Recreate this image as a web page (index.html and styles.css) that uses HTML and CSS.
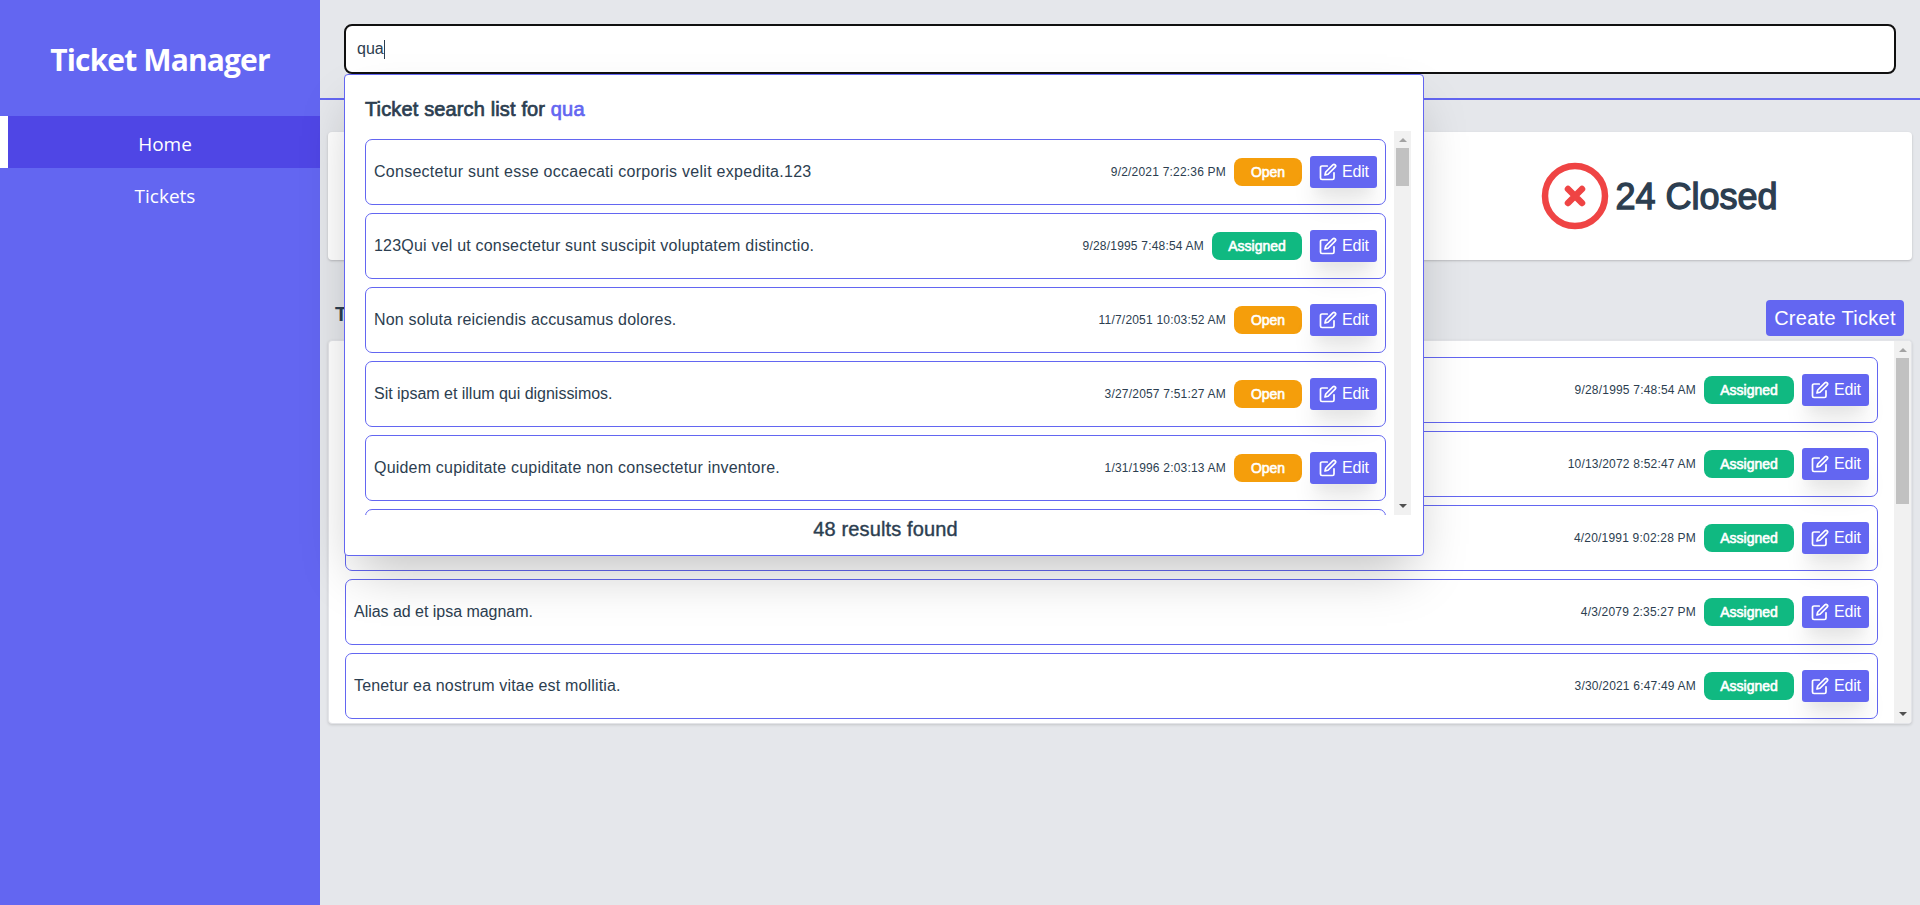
FILE: index.html
```
<!DOCTYPE html>
<html lang="en">
<head>
<meta charset="utf-8">
<title>Ticket Manager</title>
<link rel="stylesheet" href="styles.css">
</head>
<body>
<svg class="defs" width="0" height="0">
  <symbol id="edit" viewBox="0 0 24 24"><path d="M11 4H4a2 2 0 0 0-2 2v14a2 2 0 0 0 2 2h14a2 2 0 0 0 2-2v-7"/><path d="M18.500 2.500a2.121 2.121 0 0 1 3 3L12 15l-4 1 1-4 9.500-9.500z"/></symbol>
</svg>
<div class="app">
  <aside class="sidebar">
    <h1 class="brand"><span>Ticket Manager</span></h1>
    <nav>
      <a class="link active"><span>Home</span></a>
      <a class="link"><span>Tickets</span></a>
    </nav>
  </aside>
  <main class="main">
    <header class="header">
      <div class="search"><span>qua</span><i class="caret"></i></div>
      <section class="dropdown">
        <h2 class="dropdown-title">Ticket search list for <em>qua</em></h2>
        <div class="viewport results">
          <div class="rows" id="results"></div>
          <div class="scrollbar"><i class="up"></i><i class="thumb"></i><i class="down"></i></div>
        </div>
        <p class="count"><span>48 results found</span></p>
      </section>
    </header>
    <section class="stats">
      <div class="stat"></div><div class="stat"></div>
      <div class="stat closed">
        <svg width="68" height="68" viewBox="0 0 68 68"><circle cx="34" cy="34" r="30"/><path d="M27 27l14 14M41 27l-14 14"/></svg>
        <span>24 Closed</span>
      </div>
    </section>
    <div class="bar"><h2>Tickets</h2><button class="create"><span>Create Ticket</span></button></div>
    <section class="viewport tickets">
      <div class="rows" id="tickets"></div>
      <div class="scrollbar"><i class="up"></i><i class="thumb"></i><i class="down"></i></div>
    </section>
  </main>
</div>
<script src="app.js"></script>
</body>
</html>
```
FILE: styles.css
```
* { box-sizing: border-box; }
body { margin: 0; background: #e5e7eb; color: #2c3e50; font-family: "Liberation Sans", Arial, sans-serif; }
h1, h2, p { margin: 0; }
.defs { display: block; height: 0; }
.app { display: flex; height: 905px; overflow: hidden; }
.sidebar { width: 320px; flex: none; background: #6366f1; color: #fff; font-family: "Open Sans", "Noto Sans", sans-serif; }
.brand { height: 116px; padding-top: 37px; text-align: center; font-size: 30px; line-height: 45px; font-weight: 700; white-space: nowrap; letter-spacing: -0.88px; }
.link { display: flex; height: 52px; align-items: center; justify-content: center; border-left: 8px solid transparent; padding: 4px 0 0 2px; font-size: 19px; line-height: 28px; }
.link.active { background: #4f46e5; border-left-color: #fff; }
.main { flex: 1; min-width: 0; display: flex; flex-direction: column; }
.header { position: relative; height: 100px; padding: 24px; border-bottom: 2px solid #6366f1; }
.search { display: flex; align-items: center; height: 50px; padding: 0 11px; background: #fff; border: 2px solid #101010; border-radius: 8px; font-size: 16px; }
.caret { width: 1px; height: 19px; background: #2c3e50; }
.dropdown { position: absolute; left: 24px; top: 74px; width: 1080px; height: 482px; padding: 20px 12px 0 20px; background: #fff; border: 1px solid #6366f1; border-radius: 4px; box-shadow: 0 25px 50px -12px rgba(0,0,0,.25); z-index: 5; }
.dropdown-title { height: 36px; font-size: 20px; line-height: 28px; font-weight: 400; letter-spacing: .14px; -webkit-text-stroke: .7px currentColor; }
.dropdown-title em { font-style: normal; color: #6366f1; }
.viewport { display: flex; overflow: hidden; }
.results { height: 384px; }
.rows { flex: 1; display: flex; flex-direction: column; gap: 8px; padding: 8px 8px 0 0; }
.row { flex: none; display: flex; align-items: center; gap: 8px; height: 66px; padding: 0 8px; border: 1px solid #6366f1; border-radius: 7px; }
.text { flex: 1; font-size: 16px; line-height: 24px; white-space: nowrap; }
.date { font-size: 12px; line-height: 16px; letter-spacing: .2px; white-space: nowrap; }
.badge { height: 28px; padding: 0 16px; border-radius: 8px; color: #fff; font-size: 14px; line-height: 28px; text-align: center; white-space: nowrap; -webkit-text-stroke: .6px #fff; }
.open { width: 68px; background: #f59e0b; }
.assigned { width: 90px; background: #10b981; }
.edit { display: flex; align-items: center; width: 67px; height: 32px; padding: 0 8px 0 9px; gap: 5px; border-radius: 3px; background: #6366f1; color: #fff; font-size: 16px; letter-spacing: -.2px; box-shadow: 0 20px 25px -5px rgba(0,0,0,.1), 0 10px 10px -5px rgba(0,0,0,.04); }
.edit svg { width: 18px; height: 18px; flex: none; fill: none; stroke: #fff; stroke-width: 2.300; stroke-linecap: round; stroke-linejoin: round; }
.scrollbar { flex: none; width: 17px; display: flex; flex-direction: column; align-items: center; background: #f1f1f1; }
.up { border: 4px solid transparent; border-top: 0; border-bottom-color: #a3a3a3; margin: 7px 0 6px; }
.thumb { width: 13px; background: #c1c1c1; }
.results .thumb { height: 38px; }
.tickets .thumb { height: 146px; }
.down { border: 4px solid transparent; border-bottom: 0; border-top-color: #505050; margin: auto 0 7px; }
.count { padding-right: 5px; text-align: center; font-size: 20px; line-height: 28px; letter-spacing: .14px; -webkit-text-stroke: .4px currentColor; }
.stats { display: grid; grid-template-columns: repeat(3, 1fr); height: 128px; margin: 32px 8px 0; background: #fff; border-radius: 4px; box-shadow: 0 1px 3px rgba(0,0,0,.1), 0 1px 2px rgba(0,0,0,.1); }
.closed { display: flex; align-items: center; justify-content: center; gap: 6px; padding-left: 23px; font-size: 36px; -webkit-text-stroke: 1.300px currentColor; white-space: nowrap; }
.closed span { padding-top: 2px; }
.closed svg { fill: none; stroke: #ef4444; stroke-width: 6.500; stroke-linecap: round; }
.bar { display: flex; justify-content: space-between; height: 80px; padding: 40px 16px 0 15px; }
.bar h2 { font-size: 20px; line-height: 28px; font-weight: 700; }
.create { width: 138px; height: 36px; padding: 0; border: 0; border-radius: 4px; background: #6366f1; color: #fff; font: 20px/36px "Liberation Sans", Arial, sans-serif; letter-spacing: .3px; white-space: nowrap; }
.tickets { height: 384px; margin: 0 8px; border: 1px solid #e3e4e8; background: #fff; border-radius: 4px; box-shadow: 0 1px 3px rgba(0,0,0,.15); }
.tickets .rows { padding: 16px 16px 0; }
```
FILE: app.js
```
// Each ticket: title, date, status, title tracking in px.
const results = [
  ["Consectetur sunt esse occaecati corporis velit expedita.123", "9/2/2021 7:22:36 PM", "Open", 0.27],
  ["123Qui vel ut consectetur sunt suscipit voluptatem distinctio.", "9/28/1995 7:48:54 AM", "Assigned", 0.2],
  ["Non soluta reiciendis accusamus dolores.", "11/7/2051 10:03:52 AM", "Open", 0.18],
  ["Sit ipsam et illum qui dignissimos.", "3/27/2057 7:51:27 AM", "Open", -0.02],
  ["Quidem cupiditate cupiditate non consectetur inventore.", "1/31/1996 2:03:13 AM", "Open", 0.2]
];
const tickets = [
  ["", "9/28/1995 7:48:54 AM", "Assigned", 0],
  ["", "10/13/2072 8:52:47 AM", "Assigned", 0],
  ["", "4/20/1991 9:02:28 PM", "Assigned", 0],
  ["Alias ad et ipsa magnam.", "4/3/2079 2:35:27 PM", "Assigned", -0.03],
  ["Tenetur ea nostrum vitae est mollitia.", "3/30/2021 6:47:49 AM", "Assigned", 0.16]
];
const row = ([text, date, status, tracking]) => `<article class="row">
  <div class="text" style="letter-spacing:${tracking}px"><span>${text}</span></div><div class="date">${date}</div>
  <div class="badge ${status.toLowerCase()}">${status}</div>
  <div class="edit"><svg><use href="#edit"/></svg><span>Edit</span></div></article>`;
document.getElementById("results").innerHTML = results.map(row).join("") + '<article class="row"></article>';
document.getElementById("tickets").innerHTML = tickets.map(row).join("");
```
